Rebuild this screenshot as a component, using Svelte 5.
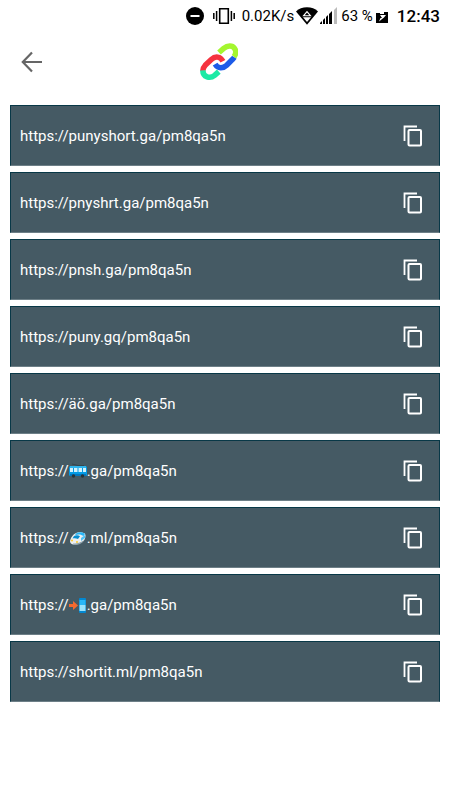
<script>
  const links = [
    { before: 'https://punyshort.ga/pm8qa5n' },
    { before: 'https://pnyshrt.ga/pm8qa5n' },
    { before: 'https://pnsh.ga/pm8qa5n' },
    { before: 'https://puny.gq/pm8qa5n' },
    { before: 'https://äö.ga/pm8qa5n' },
    { before: 'https://', icon: 'trolleybus', after: '.ga/pm8qa5n' },
    { before: 'https://', icon: 'train', after: '.ml/pm8qa5n' },
    { before: 'https://', icon: 'phone', after: '.ga/pm8qa5n' },
    { before: 'https://shortit.ml/pm8qa5n' },
  ];

  function copy(event) {
    const text = event.currentTarget.parentElement.querySelector('a').textContent;
    navigator.clipboard?.writeText(text.trim());
  }
</script>

<div class="screen">
  <div class="status">
    <svg width="18" height="18" viewBox="0 0 18 18" aria-hidden="true">
      <circle cx="9" cy="9" r="9" />
      <path d="M4.5 8h9v2h-9z" fill="#fff" />
    </svg>
    <svg class="vibrate" width="22" height="18" viewBox="0 0 22 18" aria-hidden="true">
      <path d="M6.7 1.7h8.6v14.6H6.7z" fill="none" stroke="#000" stroke-width="1.6" />
      <path d="M.8 6v6M3.6 4v10M18.4 4v10M21.2 6v6" stroke="#000" stroke-width="1.5" />
    </svg>
    <span class="speed">0.02K/s</span>
    <svg class="wifi" width="22" height="18" viewBox="0 0 22 18" aria-hidden="true">
      <path d="M0 4.5C3 1.6 6.5.3 11 .3s8 1.3 11 4.2L11 17.7z" />
      <path d="M11 4.600l3.500 4.200h-7z" fill="none" stroke="#fff" stroke-width="1.100" />
      <path d="M7 10.200h8l-4 4.800z" fill="#fff" />
    </svg>
    <svg class="signal" width="17" height="17" viewBox="0 0 17 17" aria-hidden="true">
      <path d="M0 17v-1l2-2v3zM3 17v-4l2-2v6zM6 17v-7l2-2v9zM9 17V7l3-3v13z" />
      <path d="M14 17V3l3-3v17z" fill="#bbb" />
    </svg>
    <span class="percent">63 %</span>
    <svg class="battery" width="12" height="11" viewBox="0 0 12 11" aria-hidden="true">
      <path d="M0 1h4v1h4V0h4v11H0z" />
      <path d="M4 3h6L8 5.500 3 9.500l1.500-3.500H6z" fill="#fff" />
    </svg>
    <time>12:43</time>
  </div>

  <header>
    <button class="back" type="button" aria-label="Back">
      <svg width="22" height="22" viewBox="0 0 22 22" aria-hidden="true">
        <path d="M22 11H3M12 1.5L2.800 11l9.200 9.500" fill="none" stroke="#666" stroke-width="2.2" />
      </svg>
    </button>
    <svg class="logo" width="38" height="38" viewBox="0 0 38 38" role="img" aria-label="Punyshort">
      <g fill="none" stroke-width="5.500">
        <path d="M19 9.5l4.7-4.1c4-3.2 8.8-2.9 10.8-.1 1.9 2.7 1.5 5.9-.5 8.5" stroke="#a4f62f" />
        <path d="M34.3 14.300c-.6.9-1.2 1.6-2 2.3l-5.6 5.6c-3.7 3.500-8.700 3.700-11.600-1.100" stroke="#1c5be8" />
        <path d="M22.9 18.3c-2.5-5-7.6-5.5-11.6-1.8l-6.1 5.8c-1.6 1.7-2.4 3.4-2.3 5.6" stroke="#f5333f" />
        <path d="M2.8 27.3c.2 7 7.2 8.7 11.8 5.1l4.2-3.8" stroke="#1beaa5" />
      </g>
    </svg>
  </header>

  <main>
    <ul>
      {#each links as link}
        <li>
          <a href="#link">{link.before}{#if link.icon === 'trolleybus'}<svg class="emoji" width="18" height="16" viewBox="0 0 18 16" role="img" aria-label="trolleybus">
              <path d="M3 1l6 1.5h6" fill="none" stroke="#35464e" />
              <rect x="0" y="3" width="18" height="10" rx="1.5" fill="#039be5" />
              <path d="M1 3h16v2H1z" fill="#2fb5ee" />
              <path d="M1 5h3v4H1zM5 5h3.500v4H5zM9.500 5H13v4H9.500zM14 5h3v4h-3z" fill="#d3f3ff" />
              <path d="M1 11h16v2H1z" fill="#0277bd" />
              <circle cx="4.500" cy="13" r="1.700" fill="#26343b" />
              <circle cx="13.500" cy="13" r="1.700" fill="#26343b" />
            </svg>{:else if link.icon === 'train'}<svg class="emoji" width="18" height="16" viewBox="0 0 18 16" role="img" aria-label="bullet train">
              <path d="M1 11C2 5.500 7 1.500 12 2l4 1.500c1 2 .5 5-1 7-3 3-7 4.500-11 4-2-.5-3-1.500-3-3.500z" fill="#eceff1" />
              <path d="M7 3.500C10 1.500 14 2 16 4l-1.500 2C12 4 9 4 6 5.200z" fill="#29b6f6" />
              <path d="M5 6c2-1 4.500-1 6 .3L9 9c-2-1-4-1-5.500-.5z" fill="#078ed1" />
              <path d="M12 8l4-3v3l-4 3z" fill="#4fc3f7" />
              <path d="M4 13.500c4 .5 8-1 11-3.500l-1 2c-3 2.500-7 3.500-10 2.500z" fill="#90a4ae" />
              <circle cx="3" cy="10.500" r="1" fill="#ffca28" />
              <circle cx="8" cy="12" r="1" fill="#ffca28" />
            </svg>{:else if link.icon === 'phone'}<svg class="emoji" width="18" height="16" viewBox="0 0 18 16" role="img" aria-label="mobile phone with arrow">
              <path d="M0 7h4V4l5 4.500L4 13v-3H0z" fill="#f4692e" />
              <rect x="10" y="1" width="7" height="15" rx="1" fill="#0288d1" />
              <path d="M10.500 3h6v5h-6z" fill="#29b6f6" />
              <path d="M10.500 8h6v6h-6z" fill="#9be2fb" />
            </svg>{/if}{link.after ?? ''}</a>
          <button type="button" aria-label="Copy link" onclick={copy}>
            <svg width="20" height="22" viewBox="0 0 20 22" aria-hidden="true">
              <path d="M1.500 16V1.500H14" fill="none" stroke="#fff" stroke-width="1.800" />
              <rect x="5.500" y="5" width="12.500" height="15.500" rx="1" fill="none" stroke="#fff" stroke-width="2" />
            </svg>
          </button>
        </li>
      {/each}
    </ul>
  </main>
</div>

<style>
  :global(body) {
    margin: 0;
    background: #fff;
  }

  .screen {
    min-height: 100vh;
    color: #000;
    font-family: Roboto, sans-serif;
    font-size: 15px;
  }

  svg {
    display: block;
    flex: none;
  }

  .status {
    display: flex;
    align-items: center;
    justify-content: flex-end;
    height: 31px;
    padding-right: 10px;
    white-space: nowrap;
  }

  .vibrate {
    margin-left: 9px;
  }

  .speed {
    margin-left: 7px;
  }

  .wifi,
  .signal {
    margin-left: 2px;
  }

  .percent {
    margin-left: 4px;
  }

  .battery {
    margin: 4px 0 0 3px;
  }

  time {
    margin-left: 9px;
    font-size: 17px;
    font-weight: 500;
  }

  header {
    display: grid;
    grid-template-columns: 1fr auto 1fr;
    align-items: center;
    height: 62px;
    padding: 0 20px;
  }

  .logo {
    margin-right: 12px;
  }

  button {
    display: flex;
    border: 0;
    padding: 0;
    background: none;
    cursor: pointer;
  }

  .back {
    justify-self: start;
  }

  main {
    padding: 12px 10px;
  }

  ul {
    display: flex;
    flex-direction: column;
    gap: 6px;
    margin: 0;
    padding: 0;
    list-style: none;
  }

  li {
    display: flex;
    align-items: center;
    justify-content: space-between;
    box-sizing: border-box;
    min-height: 61px;
    border: 1px solid #083847;
    border-bottom-color: #6d7f87;
    padding: 0 16px 0 9px;
    background: #455a64;
  }

  a {
    color: #fff;
    font-size: 15px;
    line-height: 20px;
    text-decoration: none;
  }

  .emoji {
    display: inline-block;
    vertical-align: -3px;
  }
</style>
